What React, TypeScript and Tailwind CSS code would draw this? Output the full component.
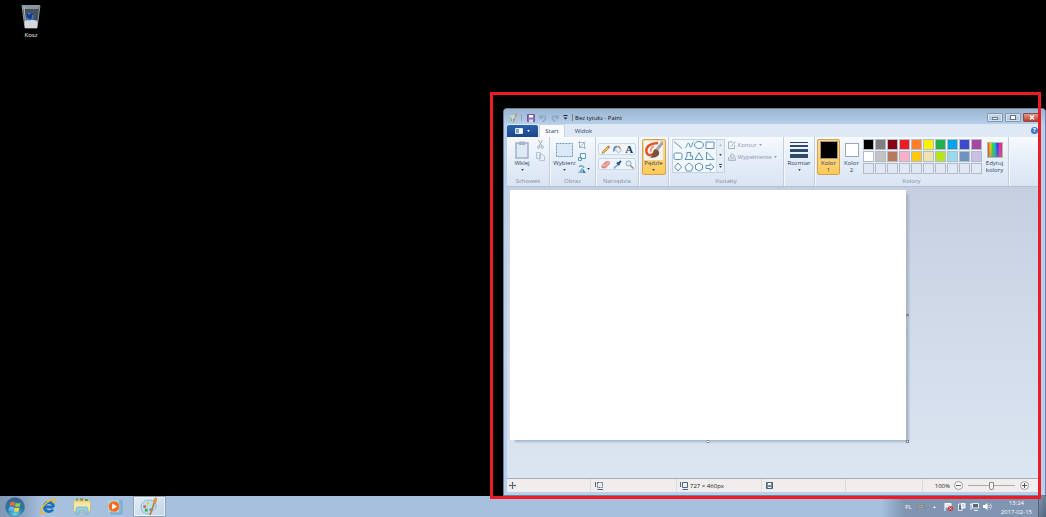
import { useState } from 'react';
import type { ReactNode } from 'react';
import clsx from 'clsx';

const PALETTE = [
  '#000000', '#7f7f7f', '#880015', '#ed1c24', '#ff7f27', '#fff200', '#22b14c', '#00a2e8', '#3f48cc', '#a349a4',
  '#ffffff', '#c3c3c3', '#b97a57', '#ffaec9', '#ffc90e', '#efe4b0', '#b5e61d', '#99d9ea', '#7092be', '#c8bfe7',
  '', '', '', '', '', '', '', '', '', '',
];

const SHAPES = [
  { name: 'Linia', d: 'M1 1.5 9 8.5' },
  { name: 'Krzywa', d: 'M1 8C3 8 3 2.5 4.500 3S5.500 8 7 7 8 2 9.500 2' },
  { name: 'Owal', d: 'M5 1.500C11 1.500 11 8.500 5 8.500S-1 1.500 5 1.500Z' },
  { name: 'Prostokąt', d: 'M1 2H9V8.500H1Z' },
  { name: 'Prostokąt zaokrąglony', d: 'M2.500 2H7.500Q9 2 9 3.500V7Q9 8.500 7.500 8.500H2.500Q1 8.500 1 7V3.500Q1 2 2.500 2Z' },
  { name: 'Wielokąt', d: 'M3 1.500H7L6 5H8.500V8.500H1L3 5Z' },
  { name: 'Trójkąt', d: 'M5 1.500 9 8.500H1Z' },
  { name: 'Trójkąt prostokątny', d: 'M1.500 1V8.500H9Z' },
  { name: 'Romb', d: 'M5 1 8.500 5 5 9 1.500 5Z' },
  { name: 'Pięciokąt', d: 'M5 1 9 4.500 7.500 9H2.500L1 4.500Z' },
  { name: 'Sześciokąt', d: 'M5 1 8.500 3V7L5 9 1.500 7V3Z' },
  { name: 'Strzałka', d: 'M1 3.500H5V1.500L9 5 5 8.500V6.500H1Z' },
];

function Arrow({ className }: { className?: string }) {
  return (
    <svg viewBox="0 0 4 3" className={clsx('h-[2px] w-[3px] shrink-0 fill-current', className)}>
      <path d="M0 0H4L2 3Z" />
    </svg>
  );
}

function Group({ label, className, children }: { label?: string; className: string; children: ReactNode }) {
  return (
    <section className={clsx('flex h-full shrink-0 flex-col border-r border-[#c3cfdf] shadow-[1px_0_0_#f4f8fd]', className)}>
      <div className="flex h-[39px] items-start justify-center">{children}</div>
      <h2 className="text-center leading-[10px] text-[#7c8da6]">{label}</h2>
    </section>
  );
}

function BigButton({ label, icon, arrow, active, className }: {
  label: string;
  icon: ReactNode;
  arrow?: boolean;
  active?: boolean;
  className?: string;
}) {
  return (
    <button
      className={clsx(
        'mt-[2px] flex h-9 shrink-0 flex-col items-center rounded-[2px] border leading-[7px]',
        active ? 'border-[#d5a24b] bg-linear-to-b from-[#fbdc9c] to-[#ffcb56]' : 'border-transparent',
        className,
      )}
    >
      <span className="flex h-5 items-center justify-center">{icon}</span>
      <span className="w-min whitespace-pre-line text-center">{label}</span>
      {arrow && <Arrow className="mt-[2px]" />}
    </button>
  );
}

function PaintIcon({ className }: { className: string }) {
  return (
    <svg viewBox="0 0 18 18" className={className}>
      <path d="M8 3C3 3 1 7 1 10c0 4 3 6 7 6 2 0 2-2 4-3s4-2 3-6-4-4-7-4Z" fill="#b9dff0" stroke="#7fb2d0" strokeWidth=".8" />
      <circle cx="4.500" cy="9" r="1.500" fill="#e7604c" />
      <circle cx="7.500" cy="6" r="1.300" fill="#f2c23c" />
      <circle cx="6" cy="12.500" r="1.500" fill="#4eae50" />
      <circle cx="10" cy="12" r="1.300" fill="#5b9bd6" />
      <path d="M14 4 9.500 17" stroke="#c27b37" strokeWidth="1.600" />
      <path d="M13 5Q12 2 15.500 0 17 3 15.200 6Z" fill="#e39339" />
    </svg>
  );
}

function TitleBar() {
  const caption = 'flex h-[9px] items-center justify-center rounded-[1px] border border-[#8296ae] bg-linear-to-b from-[#cbdaea] to-[#a9c0da] shadow-[inset_0_0_0_1px_#d6e3f1]';
  return (
    <header className="flex h-[15px] shrink-0 items-center bg-linear-to-b from-[#9bb5d2] to-[#b6cee9] pl-1 pt-[2px] text-[#111]">
      <PaintIcon className="size-[10px]" />
      <span className="ml-[3px] h-[7px] w-px bg-[#8fa5bf]" />
      <button aria-label="Zapisz" className="ml-[5px]">
        <svg viewBox="0 0 8 8" className="size-2">
          <path d="M.5.5H7.500V7.500H.5Z" fill="#8e72bd" stroke="#7059a0" />
          <path d="M2 1H6V3.500H2Z" fill="#fff" />
          <path d="M2 5.500H6V8H2Z" fill="#d9d5ea" />
        </svg>
      </button>
      <button aria-label="Cofnij" className="ml-1">
        <svg viewBox="0 0 8 8" className="size-2 fill-none stroke-[#8fa7c5] stroke-[1.5]">
          <path d="M1 1V4H4M1 4Q4 .5 6.500 3 7.500 6 3.500 7.500" />
        </svg>
      </button>
      <button aria-label="Ponów" className="ml-1">
        <svg viewBox="0 0 8 8" className="size-2 fill-none stroke-[#8fa7c5] stroke-[1.5]">
          <path d="M7 1V4H4M7 4Q4 .5 1.500 3 .5 6 4.500 7.500" />
        </svg>
      </button>
      <button aria-label="Dostosuj pasek" className="ml-1">
        <svg viewBox="0 0 5 5" className="size-[5px]">
          <path d="M.5.5H4.500" stroke="#222" />
          <path d="M.5 2.500H4.500L2.500 4.500Z" fill="#222" />
        </svg>
      </button>
      <span className="ml-1 h-[7px] w-px bg-[#6d8199]" />
      <h1 className="ml-[2px]">Bez tytułu - Paint</h1>
      <div className="ml-auto mr-[4px] flex gap-[2px]">
        <button aria-label="Minimalizuj" className={clsx(caption, 'w-4')}>
          <span className="mt-[2px] h-[3px] w-[6px] border border-[#6b7a8d] bg-white" />
        </button>
        <button aria-label="Maksymalizuj" className={clsx(caption, 'w-4')}>
          <span className="h-[5px] w-[6px] border border-[#5d6d82] bg-white" />
        </button>
        <button aria-label="Zamknij" className="flex h-[9px] w-[18px] items-center justify-center rounded-[1px] border border-[#8a4a50] bg-linear-to-b from-[#dd9a8c] to-[#bd3c29]">
          <svg viewBox="0 0 6 5" className="h-[5px] w-[6px] stroke-white stroke-[1.3]">
            <path d="M1 .5 5 4.500M5 .5 1 4.500" />
          </svg>
        </button>
      </div>
    </header>
  );
}

function Tabs() {
  return (
    <nav className="flex h-[13px] shrink-0 items-end bg-[#dfe9f5]">
      <button aria-label="Menu programu Paint" className="flex h-3 w-[31px] items-center justify-center gap-1 rounded-t-[2px] bg-linear-to-b from-[#2b62ad] to-[#1c478c] text-white">
        <svg viewBox="0 0 8 6" className="h-[6px] w-2">
          <path d="M.5.5H7.500V5.500H.5Z" fill="#7fa3d3" stroke="#dce8f6" />
          <path d="M4 1H7V5H4Z" fill="#fff" />
        </svg>
        <Arrow />
      </button>
      <button className="ml-px h-[13px] w-[26px] rounded-t-[2px] border border-b-0 border-[#c5d3e4] bg-[#f9fbfe]">Start</button>
      <button className="h-[13px] w-[37px]">Widok</button>
      <button aria-label="Pomoc" className="mb-[3px] ml-auto mr-[3px] flex size-[7px] items-center justify-center rounded-full bg-[#3f74cb] font-bold leading-[7px] text-white">?</button>
    </nav>
  );
}

function Clipboard() {
  return (
    <Group label="Schowek" className="w-[43px]">
      <BigButton
        label="Wklej"
        arrow
        className="w-[27px]"
        icon={
          <svg viewBox="0 0 14 18" className="h-[18px] w-[14px]">
            <path d="M1 2H13V17H1Z" fill="#dfe8f5" stroke="#9fb0cb" strokeWidth="1.500" />
            <path d="M4 .5H10V4H4Z" fill="#a5b4cc" />
          </svg>
        }
      />
      <div className="mr-[2px] flex w-[10px] flex-col items-center gap-[3px] pt-[3px]">
        <button aria-label="Wytnij">
          <svg viewBox="0 0 7 9" className="h-[9px] w-[7px] fill-none stroke-[#a2afc2]">
            <path d="M1.500 0 5 6M5.500 0 2 6" />
            <circle cx="1.700" cy="7.200" r="1.200" />
            <circle cx="5.300" cy="7.200" r="1.200" />
          </svg>
        </button>
        <button aria-label="Kopiuj">
          <svg viewBox="0 0 9 9" className="size-[9px] fill-[#e8eef7] stroke-[#b4c2d6]">
            <path d="M.5.5H4.500V6.500H.5ZM3.500 2.500H6.500L8.500 4.500V8.500H3.500Z" />
          </svg>
        </button>
      </div>
    </Group>
  );
}

function ImageGroup() {
  return (
    <Group label="Obraz" className="w-[46px]">
      <BigButton
        label="Wybierz"
        arrow
        className="w-[27px]"
        icon={
          <svg viewBox="0 0 17 14" className="h-[14px] w-[17px]">
            <path d="M.5.5H16.500V13.500H.5Z" fill="#dbe8f6" stroke="#6b97bc" strokeDasharray="2 1" />
          </svg>
        }
      />
      <div className="mr-1 flex w-3 shrink-0 flex-col items-start gap-1 pt-1">
        <button aria-label="Przytnij">
          <svg viewBox="0 0 8 8" className="size-2 fill-none stroke-[#a9b7ca]">
            <path d="M1.500 0V6.500H8M0 1.500H6.500V8M1 7 7.500.5" />
          </svg>
        </button>
        <button aria-label="Zmień rozmiar">
          <svg viewBox="0 0 8 8" className="size-2 fill-[#edf5fd] stroke-[#5f9bc0]">
            <path d="M2.500.5H7.500V5.500H2.500ZM.5 4.500H3.500V7.500H.5Z" />
          </svg>
        </button>
        <button aria-label="Obróć" className="flex items-center gap-px">
          <svg viewBox="0 0 8 8" className="size-2 shrink-0">
            <path d="M4 3V8H0Z" fill="#8ba7c5" />
            <path d="M4.500 3 8 8H4.500Z" fill="#3383b4" />
            <path d="M1 1.500Q5-.5 6 3" fill="none" stroke="#287bb0" />
          </svg>
          <Arrow />
        </button>
      </div>
    </Group>
  );
}

function Tools() {
  const row = 'flex h-3 w-[38px] items-center justify-around rounded-[2px] border border-[#cbd7e7] bg-[#f0f5fb]';
  return (
    <Group label="Narzędzia" className="w-[43px]">
      <div className="flex flex-col gap-[3px] pt-[6px]">
        <div className={row}>
          <button aria-label="Ołówek">
            <svg viewBox="0 0 9 9" className="size-[9px]">
              <path d="M1 8.500 2 6 7 1 8.500 2.500 3.500 7.500Z" fill="#edbd50" stroke="#8f724b" strokeWidth=".6" />
              <path d="M7 1 8.500 2.500" stroke="#cf5c50" strokeWidth="1.500" />
            </svg>
          </button>
          <button aria-label="Wypełnianie kolorem">
            <svg viewBox="0 0 9 9" className="size-[9px]">
              <path d="M4.500 1 8.500 5 5.500 8 2 4.500Z" fill="#e8eff6" stroke="#9aabc0" strokeWidth=".8" />
              <path d="M4 1.500Q.8 1 .8 6.500" fill="none" stroke="#438bbb" strokeWidth="1.500" />
              <path d="M5 1 7.500 3.500" stroke="#df7550" strokeWidth="1.300" />
            </svg>
          </button>
          <button aria-label="Tekst" className="font-['Liberation_Serif',serif] text-[11px] font-bold leading-[10px] text-[#203a5e]">A</button>
        </div>
        <div className={row}>
          <button aria-label="Gumka">
            <svg viewBox="0 0 9 9" className="size-[9px]">
              <path d="M.8 5.500 5 1.500H8.500V4L4.500 8H1Z" fill="#ea9189" stroke="#cb7a74" strokeWidth=".6" />
              <path d="M1 5.500H4.500L8.500 1.500" fill="none" stroke="#f7c8c0" />
            </svg>
          </button>
          <button aria-label="Selektor kolorów">
            <svg viewBox="0 0 9 9" className="size-[9px]">
              <path d="M.8 8.500 5 4.300" stroke="#7db4d6" strokeWidth="1.800" />
              <path d="M4 2.500 6.500 5M5.500 3.500 8 1" stroke="#2f5688" strokeWidth="2" />
            </svg>
          </button>
          <button aria-label="Lupa">
            <svg viewBox="0 0 9 9" className="size-[9px]">
              <circle cx="3.500" cy="3.500" r="2.600" fill="#deeefa" stroke="#93a5bb" />
              <path d="M5.500 5.500 8.500 8.500" stroke="#a98a68" strokeWidth="1.500" />
            </svg>
          </button>
        </div>
      </div>
    </Group>
  );
}

function BrushIcon() {
  return (
    <svg viewBox="0 0 19 19" className="size-[19px]">
      <path d="M0 0H19V19H0Z" fill="#f2f3f4" />
      <path d="M14 2Q1 3 2.500 11 4 16.500 10 12.500" fill="none" stroke="#e0532c" strokeWidth="2.500" />
      <path d="M10 5Q6 7 7 11" fill="none" stroke="#f0a080" strokeWidth="2" />
      <path d="M19 1 13 8.500" stroke="#a3a8b0" strokeWidth="3" />
      <path d="M11.500 8Q16 9 15 13.500 12 17.500 6 16.500 9 14.500 9 11 10 8 11.500 8Z" fill="#795139" />
    </svg>
  );
}

function Shapes() {
  return (
    <Group label="Kształty" className="w-[115px]">
      <div className="mt-[2px] flex h-[34px] w-[53px] shrink-0 border border-[#c3d1e2] bg-[#f2f7fc]">
        <div className="grid flex-1 grid-cols-4 place-items-center">
          {SHAPES.map((shape) => (
            <button key={shape.name} aria-label={shape.name}>
              <svg viewBox="0 0 10 10" className="size-[10px] fill-[#f7fbff] stroke-[#5b92ba] stroke-1">
                <path d={shape.d} />
              </svg>
            </button>
          ))}
        </div>
        <div className="flex w-2 flex-col items-center justify-around border-l border-[#d3ddea] bg-[#e5edf7]">
          <button aria-label="W górę" className="text-[#a5b0bf]"><Arrow className="rotate-180" /></button>
          <button aria-label="W dół"><Arrow /></button>
          <button aria-label="Więcej" className="border-t border-current pt-px"><Arrow /></button>
        </div>
      </div>
      <div className="ml-[3px] mt-[2px] flex w-[53px] flex-col text-[#8b98aa]">
        <button className="flex h-3 items-center gap-[2px]">
          <svg viewBox="0 0 8 8" className="size-2 shrink-0 fill-none stroke-[#a2afc1]">
            <path d="M5 1H.5V7.500H6.500V4M3 5.500 7.500.5" />
          </svg>
          Kontur
          <Arrow />
        </button>
        <button className="flex h-3 items-center gap-[2px]">
          <svg viewBox="0 0 8 8" className="size-2 shrink-0 fill-[#d3dbe6] stroke-[#adb9ca]">
            <path d="M.5 4V7.500H7.500V5M4 .5 7 3.500 4.500 6 2 3Z" />
          </svg>
          Wypełnienie
          <Arrow />
        </button>
      </div>
    </Group>
  );
}

function Colors() {
  return (
    <Group label="Kolory" className="w-[194px]">
      <BigButton label={'Kolor\n1'} active className="w-[23px]" icon={<span className="size-4 bg-black outline outline-[#a49471]" />} />
      <BigButton label={'Kolor\n2'} className="w-[23px]" icon={<span className="size-[14px] border border-[#9ca7b6] bg-white" />} />
      <div className="mt-[2px] grid grid-cols-10">
        {PALETTE.map((color, i) => (
          <button key={i} aria-label={color || 'Kolor niestandardowy'} className="h-3 w-3 pb-px pr-px">
            <span className="block size-[11px] border border-[#b2bac6]" style={{ backgroundColor: color || '#dfe8f4' }} />
          </button>
        ))}
      </div>
      <BigButton
        label={'Edytuj\nkolory'}
        className="w-[23px]"
        icon={
          <span className="block size-4 border border-[#b5b8bf] bg-[linear-gradient(to_bottom,transparent,#8888),linear-gradient(to_right,#f22,#fd0,#2d3,#0cd,#23e,#e2c,#f23)]" />
        }
      />
    </Group>
  );
}

function Ribbon() {
  return (
    <div className="flex h-[50px] shrink-0 overflow-hidden border-b border-[#b2c1d5] bg-linear-to-b from-[#f7fafe] via-[#e4edf8] to-[#dae5f3]">
      <Clipboard />
      <ImageGroup />
      <Tools />
      <Group className="w-[30px]">
        <BigButton label="Pędzle" arrow active className="w-6" icon={<BrushIcon />} />
      </Group>
      <Shapes />
      <Group className="w-[31px]">
        <BigButton
          label="Rozmiar"
          arrow
          className="w-7"
          icon={
            <svg viewBox="0 0 18 16" className="h-4 w-[18px] fill-[#2f4a6f]">
              <path d="M0 0H18V1H0ZM0 3H18V5H0ZM0 7H18V10H0ZM0 12H18V16H0Z" />
            </svg>
          }
        />
      </Group>
      <Colors />
    </div>
  );
}

function Workspace() {
  const handle = 'absolute size-[3px] border border-[#7b8796] bg-white';
  return (
    <main className="min-h-0 flex-1 bg-linear-to-b from-[#c6cfe0] to-[#dce6f2] pb-[38px] pl-[3px] pr-[135px] pt-[3px]">
      <div className="relative h-full bg-white shadow-[4px_3px_2px_-1px_#a9b7cb]">
        <span className={clsx(handle, '-right-[3px] top-1/2 -translate-y-1/2')} />
        <span className={clsx(handle, '-bottom-[3px] left-1/2 -translate-x-1/2')} />
        <span className={clsx(handle, '-bottom-[3px] -right-[3px]')} />
      </div>
    </main>
  );
}

function SizeIcon({ dashed }: { dashed?: boolean }) {
  return (
    <svg viewBox="0 0 8 8" className="size-2 shrink-0 fill-none stroke-[#4e6481]">
      <path d="M.5 0V5M2.500 7.500H8" />
      <path d="M2.500.5H7.500V5.500H2.500Z" strokeDasharray={dashed ? '2 1' : undefined} />
    </svg>
  );
}

function StatusBar() {
  const [zoom, setZoom] = useState(50);
  const cell = 'flex h-full shrink-0 items-center border-r border-[#dcdcde]';
  const round = 'flex size-[9px] items-center justify-center rounded-full border border-[#999ea5] bg-[#fafafa]';
  return (
    <footer className="flex h-[14px] shrink-0 items-center border-t border-[#a5adb8] bg-[#f0edec] text-[#222]">
      <div className={clsx(cell, 'w-[84px] pl-[2px]')}>
        <svg viewBox="0 0 7 7" className="size-[7px] stroke-[#4e6481]">
          <path d="M3.500 0V7M0 3.500H7" />
          <path d="M2.500 1H4.500M2.500 6H4.500M1 2.500V4.500M6 2.500V4.500" strokeWidth=".6" />
        </svg>
      </div>
      <div className={clsx(cell, 'w-[86px] pl-1')}><SizeIcon dashed /></div>
      <div className={clsx(cell, 'w-[85px] gap-[2px] pl-[3px]')}><SizeIcon />727 × 460px</div>
      <div className={clsx(cell, 'w-[84px] pl-1')}>
        <svg viewBox="0 0 7 7" className="size-[7px]">
          <path d="M.5.5H6.500V6.500H.5Z" fill="#7189a5" stroke="#4a617e" />
          <path d="M2 1H5V3H2ZM2 5H5V6H2Z" fill="#f4f6f8" />
        </svg>
      </div>
      <div className={clsx(cell, 'w-[77px]')} />
      <div className="ml-auto mr-3 flex shrink-0 items-center">
        <label htmlFor="zoom" className="mr-1">100%</label>
        <button aria-label="Pomniejsz" className={round}>
          <span className="h-px w-[5px] bg-[#666]" />
        </button>
        <input
          id="zoom"
          type="range"
          value={zoom}
          onChange={(e) => setZoom(Number(e.target.value))}
          className="mx-[5px] h-[9px] w-[47px] appearance-none bg-[linear-gradient(#aaa,#aaa)] bg-[length:100%_1px] bg-center bg-no-repeat [&::-webkit-slider-thumb]:h-[8px] [&::-webkit-slider-thumb]:w-[5px] [&::-webkit-slider-thumb]:appearance-none [&::-webkit-slider-thumb]:rounded-b-[2px] [&::-webkit-slider-thumb]:border [&::-webkit-slider-thumb]:border-[#8a8a8a] [&::-webkit-slider-thumb]:bg-[#f3f3f3]"
        />
        <button aria-label="Powiększ" className={round}>
          <svg viewBox="0 0 5 5" className="size-[5px] stroke-[#555]"><path d="M2.500 0V5M0 2.500H5" /></svg>
        </button>
      </div>
    </footer>
  );
}

function Taskbar() {
  return (
    <footer className="flex h-[21px] shrink-0 items-center bg-[#a6c0dd] text-white">
      <div className="flex h-full flex-1 items-center bg-linear-to-r from-[#8299b6] via-[#8da6c4] via-[25px] to-[#a6c0dd] to-[42px]">
        <button aria-label="Start" className="ml-[5px]">
          <svg viewBox="0 0 20 20" className="size-5">
            <defs>
              <radialGradient id="orb" cx=".5" cy=".9" r=".9">
                <stop stopColor="#64d5e6" />
                <stop offset=".5" stopColor="#287aaa" />
                <stop offset="1" stopColor="#3d628a" />
              </radialGradient>
            </defs>
            <circle cx="10" cy="10" r="9.500" fill="url(#orb)" stroke="#4c7297" strokeWidth=".6" />
            <path d="M5.500 5.500Q8 4 10 5.500L9.300 9Q7 8 4.500 9Z" fill="#ee6b35" />
            <path d="M10.700 5.800Q13 7 15.500 5.800L14.700 9.500Q12 10.500 10 9.300Z" fill="#9cc84b" />
            <path d="M4.300 10Q7 9 9 10.200L8.200 14Q6 12.800 3.500 13.800Z" fill="#63b7ed" />
            <path d="M9.700 10.500Q12 11.500 14.500 10.500L13.600 14.200Q11 15.300 9 14.300Z" fill="#fbd347" />
          </svg>
        </button>
        <button aria-label="Internet Explorer" className="ml-[15px]">
          <svg viewBox="0 0 17 17" className="size-[17px] fill-none">
            <path d="M13.500 9H4.500M13 11.500Q11 14 8 13.500 4 12.500 4.500 8.500 5 4.500 9 4.500 13.500 4.500 13.500 9" stroke="#1a72c0" strokeWidth="2.800" />
            <path d="M12.500 5Q19-1 11 2 4 5 1 12-.5 17 5 14.500" stroke="#efb92c" strokeWidth="1.500" />
          </svg>
        </button>
        <button aria-label="Eksplorator Windows" className="ml-4">
          <svg viewBox="0 0 18 17" className="h-[17px] w-[18px]">
            <path d="M1 2H16L17 4V14H1Z" fill="#eed780" stroke="#d0b45c" strokeWidth=".6" />
            <path d="M3 1.500H5M7 1.500H10M12 2H15" stroke="#57a45b" strokeWidth="2" />
            <path d="M8 1.500H10" stroke="#db6b48" strokeWidth="2" />
            <path d="M1 4.500H17V13H1Z" fill="#f8e7a0" />
            <path d="M3 16V11Q3 9 5 9H13Q15 9 15 11V16H12V13H6V16Z" fill="#8fcfe9" stroke="#68a8c7" strokeWidth=".6" />
          </svg>
        </button>
        <button aria-label="Windows Media Player" className="ml-4">
          <svg viewBox="0 0 16 16" className="size-4">
            <path d="M4 2H15V15H4Z" fill="#7fb9dc" stroke="#6fa9cd" />
            <path d="M1 1H12V13H1Z" fill="#a7d3eb" />
            <circle cx="7" cy="7.500" r="5.500" fill="#ed6c20" stroke="#f9c192" strokeWidth=".6" />
            <path d="M5.200 4.500V10.500L10.200 7.500Z" fill="#fff" />
          </svg>
        </button>
        <button aria-label="Paint" className="ml-[10px] flex h-full w-[33px] items-center justify-center border border-[#8fa4bf] bg-linear-to-br from-[#e4ecf5] to-[#c3d4e7] shadow-[inset_0_0_0_1px_#e8f0f8]">
          <PaintIcon className="size-[19px]" />
        </button>
      </div>
      <div className="flex h-full items-center bg-linear-to-r from-[#a6c0dd] to-[#8095b1] to-[24px] pl-[24px]">
        <span>PL</span>
        <svg viewBox="0 0 8 5" className="ml-[5px] h-[5px] w-2">
          <path d="M0 0H8V5H0Z" fill="#85888f" />
          <path d="M1 1.500H7M1 3.500H7" stroke="#c3c7ce" strokeWidth=".7" strokeDasharray="1 .5" />
        </svg>
        <button aria-label="Pokaż ukryte ikony" className="ml-2"><Arrow className="rotate-180" /></button>
        <svg viewBox="0 0 9 9" className="ml-2 size-[9px]">
          <path d="M1 1V9M1.500 1.500H7V5H1.500Z" fill="#dce5ed" stroke="#fff" />
          <circle cx="6.500" cy="6.500" r="2.500" fill="#d52e2d" />
          <path d="m5.500 5.500 2 2m0-2-2 2" stroke="#fff" strokeWidth=".8" />
        </svg>
        <svg viewBox="0 0 9 9" className="ml-1 size-[9px]">
          <path d="M1.500 2H5V8.500H1.500Z" fill="#65788e" stroke="#e8edf3" />
          <path d="M4.500 1.500H8V6H4.500Z" fill="#ced8e2" stroke="#fff" />
        </svg>
        <svg viewBox="0 0 9 9" className="ml-1 size-[9px] fill-[#53677f] stroke-[#e8edf3]">
          <path d="M2.500 1.500H8.500V6H2.500ZM4 8.500H8M1 1V8M0 2.500H2.500" />
        </svg>
        <svg viewBox="0 0 9 9" className="ml-1 size-[9px]">
          <path d="M0 3H2L4.500 1V8L2 6H0Z" fill="#fff" />
          <path d="M5.800 3Q7 4.500 5.800 6M7.300 1.500Q9.500 4.500 7.300 7.500" fill="none" stroke="#e8edf3" strokeWidth=".8" />
        </svg>
        <time dateTime="2017-02-15T13:24" className="mx-[6px] ml-[9px] pt-[3px] text-center leading-[9px]">
          13:24<br />2017-02-15
        </time>
        <button aria-label="Pokaż pulpit" className="h-full w-2 border-l border-[#506279] bg-linear-to-br from-[#8295ad] to-[#4f637d]" />
      </div>
    </footer>
  );
}

export default function App() {
  return (
    <div className="relative flex min-h-screen flex-col bg-black font-['Open_Sans',sans-serif] text-[6px] leading-[8px] text-[#2c4566]">
      <div className="relative flex-1">
        <button className="ml-[15px] mt-1 flex w-8 flex-col items-center gap-[2px] text-white">
          <svg viewBox="0 0 20 25" className="h-[25px] w-5">
            <path d="M1 1.500H19L16 24H4Z" fill="#46515c" stroke="#a9b4bd" strokeWidth=".8" />
            <path d="M1.500 1.500H18.500L17.500 5H2Z" fill="#8b979f" />
            <path d="M3.500 17Q10 14 16.500 17L16 24H4Z" fill="#d5d9dc" />
            <path d="M6 10 10 8 12 11 10 16 5 15Z" fill="#173c83" />
            <path d="M7 10 10 9M12 11 11 16M5 14 9 16" stroke="#3b7bd5" strokeWidth="1.500" />
            <path d="M3 3 5 22" stroke="#dde2e5" strokeWidth=".7" />
          </svg>
          Kosz
        </button>

        <div className="absolute bottom-0 left-[503px] right-0 top-[108px] flex flex-col overflow-hidden rounded-t-[4px] border border-[#6d839c] bg-[#b7d0ec]">
          <TitleBar />
          <div className="mb-[3px] ml-[3px] mr-1 flex min-h-0 flex-1 flex-col">
            <Tabs />
            <Ribbon />
            <Workspace />
            <StatusBar />
          </div>
        </div>
      </div>
      <Taskbar />
      <div className="pointer-events-none absolute bottom-[18px] left-[490px] right-[5px] top-[92px] border-3 border-[#ed1c24]" />
    </div>
  );
}
